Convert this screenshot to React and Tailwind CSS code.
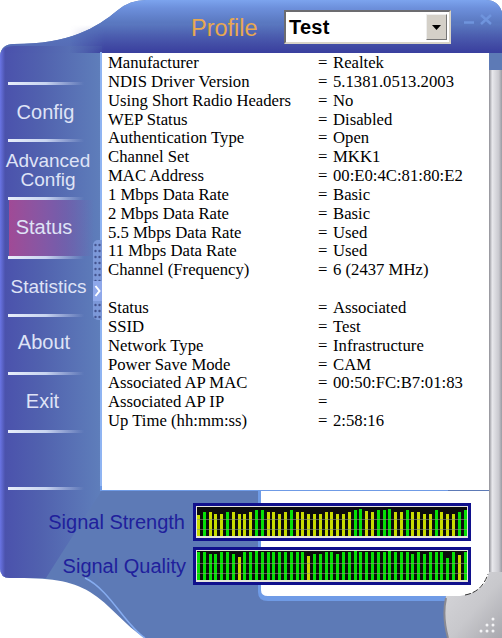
const rowsA = [
  ["Manufacturer", "Realtek"],
  ["NDIS Driver Version", "5.1381.0513.2003"],
  ["Using Short Radio Headers", "No"],
  ["WEP Status", "Disabled"],
  ["Authentication Type", "Open"],
  ["Channel Set", "MKK1"],
  ["MAC Address", "00:E0:4C:81:80:E2"],
  ["1 Mbps Data Rate", "Basic"],
  ["2 Mbps Data Rate", "Basic"],
  ["5.5 Mbps Data Rate", "Used"],
  ["11 Mbps Data Rate", "Used"],
  ["Channel (Frequency)", "6 (2437 MHz)"],
];
const rowsB = [
  ["Status", "Associated"],
  ["SSID", "Test"],
  ["Network Type", "Infrastructure"],
  ["Power Save Mode", "CAM"],
  ["Associated AP MAC", "00:50:FC:B7:01:83"],
  ["Associated AP IP", ""],
  ["Up Time (hh:mm:ss)", "2:58:16"],
];

const strengthColors = "ygyyygyyyyggyyyygyyyyyyy" + "yyyggyyggg" + "yygyyyygyyygg";
const strengthHeights = [
  21, 24, 24, 22, 22, 24, 24, 22, 22, 24, 26, 26, 24, 24, 22, 24, 26, 24, 24, 22, 22, 22, 24, 24,
  22, 22, 24, 26, 27, 25, 24, 26, 26, 27, 24, 24, 26, 24, 24, 22, 22, 26, 24, 22, 22, 24, 26,
];
const qualityColors = "gggggggyggggggggggg" + "yggggggggggggggggggggggggg" + "ygg";
const qualityHeights = [
  28, 28, 26, 26, 28, 28, 26, 23, 28, 28, 29, 28, 28, 28, 28, 28, 28, 28, 28, 24, 26, 26, 28, 28,
  26, 28, 28, 29, 28, 28, 28, 28, 28, 29, 28, 28, 28, 26, 28, 26, 28, 28, 28, 22, 28, 25, 28,
];

function Meter({ colors, heights }) {
  return (
    <div className="h-[38px] w-[278px] border-[3px] border-[#10108c] bg-[#e4e4dc] pb-[2px] pl-px pr-px pt-px">
      <div className="relative flex h-full items-end justify-between bg-[#0c0c0c]">
        {heights.map((h, i) => (
          <div
            key={i}
            className={colors[i] === "g" ? "w-[3px] bg-[#06e006]" : "w-[3px] bg-[#c8dc00]"}
            style={{ height: h }}
          />
        ))}
        <div className="absolute left-0 right-0 top-[12px] h-px bg-[#8c9480] opacity-60" />
        <div className="absolute left-0 right-0 top-[22px] h-px bg-[#8c9480] opacity-60" />
      </div>
    </div>
  );
}

function Sep() {
  return <div className="mx-[8px] h-[3px] w-[76px] bg-gradient-to-r from-[#e8eefa] via-[#c8d4f0] to-transparent" />;
}

function NavItem({ children, className, h }) {
  return (
    <div
      className={"flex flex-col items-center justify-center text-center leading-[19px] text-[#dfe3f6] " + className}
      style={{ height: h }}
    >
      {children}
    </div>
  );
}

function Skin() {
  return (
    <svg className="absolute inset-0" width="502" height="638" viewBox="0 0 502 638">
      <defs>
        <linearGradient id="hdr" x1="0" y1="0" x2="0" y2="1">
          <stop offset="0" stopColor="#7ca4ee" />
          <stop offset="0.14" stopColor="#6d90dc" />
          <stop offset="0.4" stopColor="#5a78c0" />
          <stop offset="1" stopColor="#5468b2" />
        </linearGradient>
        <linearGradient id="band" x1="0" y1="0" x2="0" y2="1">
          <stop offset="0" stopColor="#3a3f9e" stopOpacity="0" />
          <stop offset="1" stopColor="#3a3f9e" />
        </linearGradient>
        <linearGradient id="bandFade" x1="0" y1="0" x2="1" y2="0">
          <stop offset="0" stopColor="#000" />
          <stop offset="0.08" stopColor="#fff" />
        </linearGradient>
        <mask id="bandMask" maskUnits="userSpaceOnUse" x="70" y="25" width="432" height="28">
          <rect x="70" y="25" width="432" height="28" fill="url(#bandFade)" />
        </mask>
        <linearGradient id="side" x1="0" y1="0" x2="1" y2="0">
          <stop offset="0" stopColor="#6a74e6" />
          <stop offset="0.05" stopColor="#4a50ac" />
          <stop offset="0.4" stopColor="#5060ae" />
          <stop offset="1" stopColor="#5f7fbb" />
        </linearGradient>
        <linearGradient id="grey" x1="0" y1="0" x2="1" y2="0">
          <stop offset="0" stopColor="#8d8d94" />
          <stop offset="0.25" stopColor="#e8e8ec" />
          <stop offset="0.75" stopColor="#c9c9cf" />
          <stop offset="1" stopColor="#9a9aa2" />
        </linearGradient>
        <linearGradient id="cor" x1="0" y1="0" x2="1" y2="1">
          <stop offset="0" stopColor="#d8d8dc" />
          <stop offset="0.55" stopColor="#c8c8cc" />
          <stop offset="1" stopColor="#a8a8ae" />
        </linearGradient>
      </defs>
      <path d="M0 56 Q1 44 14 44 C70 44 96 28 118 10 Q130 0 146 0 L486 0 Q498 0 502 12 L502 638 L145 638 C125 626 110 604 90 592 C70 580 50 578 10 578 Q0 578 0 568 Z" fill="#5d7ab6" />
      <path d="M0 56 Q1 44 14 44 C70 44 96 28 118 10 Q130 0 146 0 L486 0 Q498 0 502 12 L502 53 L0 53 Z" fill="url(#hdr)" />
      <path d="M0 56 Q1 46 14 46 L102 46 L102 490 L46 578 L10 578 Q0 578 0 568 Z" fill="url(#side)" opacity="0.95" />
      <rect x="70" y="25" width="432" height="28" fill="url(#band)" mask="url(#bandMask)" />
      <rect x="100" y="52" width="2" height="438" fill="#8fb4f2" />
      <rect x="100" y="486" width="348" height="5" fill="#6f9be6" />
      <rect x="260" y="491" width="230" height="105" fill="#ffffff" />
      <path d="M258 491 L261 491 L261 590 Q261 596 268 596 L446 596 L446 601 L268 601 Q258 601 258 592 Z" fill="#6f9be6" />
      <path d="M489 70 L502 70 L502 638 L489 638 Z" fill="url(#grey)" />
      <path d="M489 490 L448 490 L448 487 L489 487 Z" fill="#d8d8dc" />
      <path d="M446 596 L460 596 Q486 592 489 572 L502 572 L502 638 L448 638 Q442 616 446 596 Z" fill="url(#cor)" />
      <path d="M446 598 Q442 616 448 638" fill="none" stroke="#8a8a92" strokeWidth="2" />
      <path d="M465 595 Q482 592 488 574" fill="none" stroke="#333" strokeWidth="1" strokeDasharray="6 2" />
      <g fill="#f4f4f6">
        <circle cx="493" cy="619" r="1.5" /><circle cx="487" cy="625" r="1.5" /><circle cx="493" cy="625" r="1.5" />
        <circle cx="481" cy="631" r="1.5" /><circle cx="487" cy="631" r="1.5" /><circle cx="493" cy="631" r="1.5" />
      </g>
      <path d="M85 578 C110 590 125 625 145 638" fill="none" stroke="#86acf0" strokeWidth="1.5" />
    </svg>
  );
}

export default function App() {
  return (
    <div className="relative h-[638px] w-[502px] overflow-hidden bg-white font-['Liberation_Sans',sans-serif]">
      <Skin />
      <div className="relative flex h-full flex-col">
        <header className="flex h-[53px] items-start pt-[10px]">
          <div className="ml-[191px] mt-[3px] w-[93px] text-[23.5px] leading-[30px] text-[#e8a850]">Profile</div>
          <div className="flex h-[34px] w-[167px] items-center justify-between border-2 border-b-[#d8d4c8] border-l-[#6c6c70] border-r-[#d8d4c8] border-t-[#6c6c70] bg-white pl-[3px] pr-[2px]">
            <span className="text-[20px] font-bold tracking-[0.25px] text-black">Test</span>
            <div className="flex h-[26px] w-[21px] items-center justify-center border border-b-[#777] border-l-[#eee] border-r-[#777] border-t-[#eee] bg-[#d4d0c8]">
              <svg width="9" height="5" viewBox="0 0 9 5"><path d="M0 0H9L4.5 5Z" fill="#000" /></svg>
            </div>
          </div>
          <svg className="ml-[11px] mt-[4px]" width="32" height="16" viewBox="0 0 32 16">
            <path d="M2 8.5H12" stroke="#6f94dd" strokeWidth="2.5" />
            <path d="M19 1L29 10M29 1L19 10" stroke="#6f94dd" strokeWidth="2.5" />
          </svg>
        </header>

        <div className="flex h-[437px]">
          <nav className="relative w-[100px] pt-[29px]">
            <Sep />
            <NavItem h={54} className="pr-[9px] text-[20px]">Config</NavItem>
            <Sep />
            <NavItem h={55} className="pr-[4px] text-[19px]">Advanced<br />Config</NavItem>
            <Sep />
            <NavItem h={56} className="ml-[9px] w-[85px] bg-gradient-to-r from-[#a04a96] via-[#7d5aa8] to-transparent pb-[2px] pr-[15px] text-[20px]">Status</NavItem>
            <Sep />
            <NavItem h={55} className="pr-[3px] text-[19px]">Statistics</NavItem>
            <Sep />
            <NavItem h={55} className="pb-[4px] pr-[12px] text-[20px]">About</NavItem>
            <Sep />
            <NavItem h={55} className="pb-[2px] pr-[15px] text-[20px]">Exit</NavItem>
            <Sep />
            <div className="h-[54px]" />
            <Sep />
            <div className="absolute left-[93px] top-[187px] h-[80px] w-[9px] rounded-l-[5px] bg-[#7c98d8]">
              <svg width="9" height="80" viewBox="0 0 9 80">
                <g fill="#44548f">
                  {Array.from({ length: 13 }, (_, i) => (
                    <g key={i}>
                      <circle cx="2.5" cy={5 + i * 6} r="1.2" />
                      <circle cx="6.5" cy={5 + i * 6} r="1.2" />
                    </g>
                  ))}
                </g>
                <rect x="0" y="41" width="9" height="20" fill="#8fa8ea" />
                <path d="M2.5 46L6.5 51L2.5 56" fill="none" stroke="#fff" strokeWidth="2" />
              </svg>
            </div>
          </nav>
          <main className="ml-[2px] w-[387px] bg-white pl-[6px] pt-[1px] font-['Liberation_Serif',serif] text-[16.7px] leading-[18.85px] text-black">
            <dl className="grid grid-cols-[210px_15px_1fr]">
              {rowsA.map(([k, v]) => (
                <div key={k} className="contents">
                  <dt>{k}</dt><span>=</span><dd>{v}</dd>
                </div>
              ))}
              <div className="col-span-3 h-[18.85px]" />
              {rowsB.map(([k, v]) => (
                <div key={k} className="contents">
                  <dt>{k}</dt><span>=</span><dd>{v}</dd>
                </div>
              ))}
            </dl>
          </main>
        </div>

        <section className="mt-[13px] flex flex-col gap-[6px] text-[20px] text-[#20209c]">
          <div className="flex items-center justify-end pr-[31px]">
            <span className="mr-[8px]">Signal Strength</span>
            <Meter colors={strengthColors} heights={strengthHeights} />
          </div>
          <div className="flex items-center justify-end pr-[31px]">
            <span className="mr-[7px]">Signal Quality</span>
            <Meter colors={qualityColors} heights={qualityHeights} />
          </div>
        </section>
      </div>
    </div>
  );
}
